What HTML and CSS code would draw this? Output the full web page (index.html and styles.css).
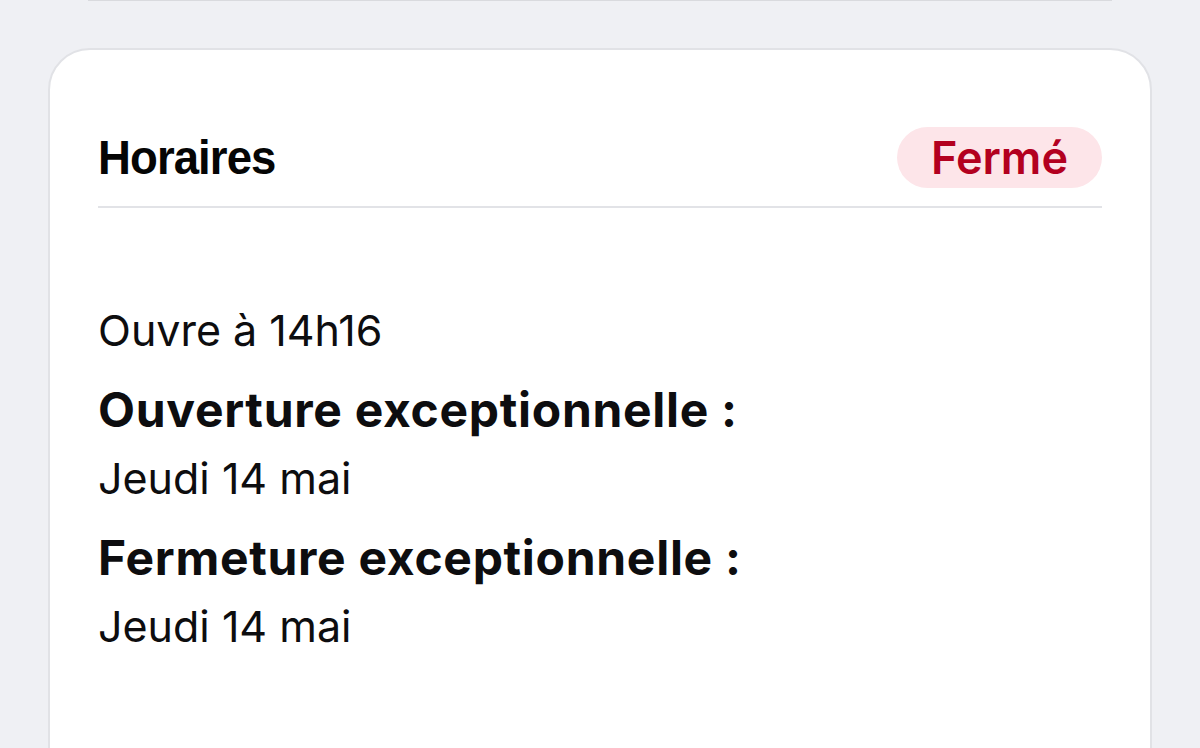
FILE: index.html
```html
<!DOCTYPE html>
<html lang="fr">
<head>
<meta charset="utf-8">
<title>Horaires</title>
<link rel="stylesheet" href="styles.css">
</head>
<body>
<div class="prev-card"></div>
<section class="card">
  <header class="card-head">
    <h2 class="title">Horaires</h2>
    <span class="badge">Fermé</span>
  </header>
  <div class="card-body">
    <p class="line">Ouvre à 14h16</p>
    <div class="block">
      <p class="line bold">Ouverture exceptionnelle :</p>
      <p class="line">Jeudi 14 mai</p>
    </div>
    <div class="block">
      <p class="line bold">Fermeture exceptionnelle :</p>
      <p class="line">Jeudi 14 mai</p>
    </div>
  </div>
</section>
</body>
</html>
```
FILE: styles.css
```css
html, body {
  margin: 0;
  padding: 0;
}
body {
  background: #eff0f4;
  font-family: "Inter", "Liberation Sans", sans-serif;
  color: #0d0d0f;
  height: 748px;
  overflow: hidden;
}
.prev-card {
  height: 1px;
  margin: 0 88px;
  background: #d9dade;
}
.card {
  margin: 47px 48px 0;
  background: #fff;
  border: 2px solid #e1e2e6;
  border-radius: 42px;
  padding: 0 48px;
  height: 800px;
}
.card-head {
  display: flex;
  justify-content: space-between;
  align-items: center;
  padding: 77px 0 18px;
  border-bottom: 2px solid #e2e3e7;
}
.title {
  margin: 0;
  font-family: "Liberation Sans", sans-serif;
  font-weight: 700;
  font-size: 49px;
  line-height: 61px;
  letter-spacing: -1px;
  color: #050505;
  transform: scaleX(0.93);
  transform-origin: left center;
}
.badge {
  display: inline-flex;
  align-items: center;
  height: 61px;
  padding: 0 34px;
  border-radius: 31px;
  background: #fde5e9;
  color: #b3001f;
  font-weight: 600;
  font-size: 45px;
}
.card-body {
  padding-top: 89px;
}
.line {
  margin: 0;
  font-size: 43px;
  line-height: 66px;
}
.bold {
  font-weight: 700;
  font-size: 48px;
  line-height: 70px;
  letter-spacing: 0.7px;
}
.block {
  margin-top: 12px;
}
```
